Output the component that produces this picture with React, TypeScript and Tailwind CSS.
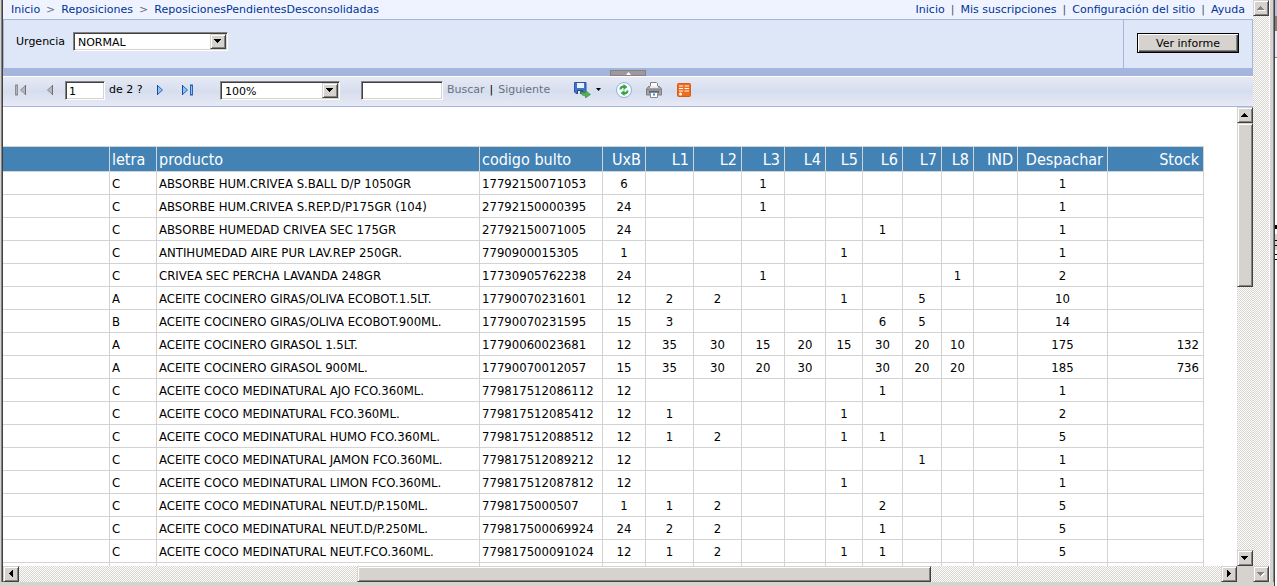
import type { ReactNode } from "react";

type Align = "left" | "center" | "right";

interface Column { label: string; width: number; head: Align; cell: Align; }

const COLUMNS: Column[] = [
  { label: "", width: 107, head: "left", cell: "left" },
  { label: "letra", width: 47, head: "left", cell: "left" },
  { label: "producto", width: 323, head: "left", cell: "left" },
  { label: "codigo bulto", width: 123, head: "left", cell: "left" },
  { label: "UxB", width: 43, head: "right", cell: "center" },
  { label: "L1", width: 48, head: "right", cell: "center" },
  { label: "L2", width: 48, head: "right", cell: "center" },
  { label: "L3", width: 43, head: "right", cell: "center" },
  { label: "L4", width: 41, head: "right", cell: "center" },
  { label: "L5", width: 37, head: "right", cell: "center" },
  { label: "L6", width: 40, head: "right", cell: "center" },
  { label: "L7", width: 39, head: "right", cell: "center" },
  { label: "L8", width: 32, head: "right", cell: "center" },
  { label: "IND", width: 44, head: "right", cell: "center" },
  { label: "Despachar", width: 90, head: "right", cell: "center" },
  { label: "Stock", width: 96, head: "right", cell: "right" },
];

// letra | producto | codigo | UxB | L1..L8 | IND | Despachar | Stock
const ROWS = [
  "C|ABSORBE HUM.CRIVEA S.BALL D/P 1050GR|17792150071053|6|||1|||||||1|",
  "C|ABSORBE HUM.CRIVEA S.REP.D/P175GR (104)|27792150000395|24|||1|||||||1|",
  "C|ABSORBE HUMEDAD CRIVEA SEC 175GR|27792150071005|24||||||1||||1|",
  "C|ANTIHUMEDAD AIRE PUR LAV.REP 250GR.|7790900015305|1|||||1|||||1|",
  "C|CRIVEA SEC PERCHA LAVANDA 248GR|17730905762238|24|||1|||||1||2|",
  "A|ACEITE COCINERO GIRAS/OLIVA ECOBOT.1.5LT.|17790070231601|12|2|2|||1||5|||10|",
  "B|ACEITE COCINERO GIRAS/OLIVA ECOBOT.900ML.|17790070231595|15|3|||||6|5|||14|",
  "A|ACEITE COCINERO GIRASOL 1.5LT.|17790060023681|12|35|30|15|20|15|30|20|10||175|132",
  "A|ACEITE COCINERO GIRASOL 900ML.|17790070012057|15|35|30|20|30||30|20|20||185|736",
  "C|ACEITE COCO MEDINATURAL AJO FCO.360ML.|779817512086112|12||||||1||||1|",
  "C|ACEITE COCO MEDINATURAL FCO.360ML.|779817512085412|12|1||||1|||||2|",
  "C|ACEITE COCO MEDINATURAL HUMO FCO.360ML.|779817512088512|12|1|2|||1|1||||5|",
  "C|ACEITE COCO MEDINATURAL JAMON FCO.360ML.|779817512089212|12|||||||1|||1|",
  "C|ACEITE COCO MEDINATURAL LIMON FCO.360ML.|779817512087812|12|||||1|||||1|",
  "C|ACEITE COCO MEDINATURAL NEUT.D/P.150ML.|7798175000507|1|1|2||||2||||5|",
  "C|ACEITE COCO MEDINATURAL NEUT.D/P.250ML.|779817500069924|24|2|2||||1||||5|",
  "C|ACEITE COCO MEDINATURAL NEUT.FCO.360ML.|779817500091024|12|1|2|||1|1||||5|",
  "||||||||||||||",
].map((r) => r.split("|"));

const ALIGN: Record<Align, string> = {
  left: "text-left pl-0.5",
  center: "text-center",
  right: "text-right pr-1",
};

const RAISED = "bg-[#d6d3ce] border border-t-[#d6d3ce] border-l-[#d6d3ce] border-r-[#424142] border-b-[#424142] shadow-[inset_1px_1px_0_#fff,inset_-1px_-1px_0_#848284]";
const SUNKEN = "bg-white border border-t-[#848284] border-l-[#848284] border-r-white border-b-white shadow-[inset_1px_1px_0_#424142,inset_-1px_-1px_0_#d6d3ce]";
const TRACK = "bg-[repeating-conic-gradient(#fff_0_25%,#d6d3ce_0_50%)] bg-[length:2px_2px]";

const ARROWS = {
  up: "M3 0h1v1h1v1h1v1h1v1H0V3h1V2h1V1h1z",
  down: "M0 0h7v1H6v1H5v1H4v1H3V3H2V2H1V1H0z",
  left: "M4 0v7H3V6H2V5H1V4H0V3h1V2h1V1h1V0z",
  right: "M0 0v7h1V6h1V5h1V4h1V3H3V2H2V1H1V0z",
};

function Arrow({ dir, muted }: { dir: keyof typeof ARROWS; muted?: boolean }) {
  const flat = dir === "up" || dir === "down";
  return (
    <svg width={flat ? 8 : 5} height={flat ? 5 : 8} shapeRendering="crispEdges" aria-hidden="true">
      {muted && <path d={ARROWS[dir]} fill="#fff" transform="translate(1 1)" />}
      <path d={ARROWS[dir]} fill={muted ? "#848284" : "#000"} />
    </svg>
  );
}

function ScrollButton({ dir, label, muted }: { dir: keyof typeof ARROWS; label: string; muted?: boolean }) {
  return (
    <button aria-label={label} disabled={muted} className={`flex size-4 shrink-0 items-center justify-center ${RAISED}`}>
      <Arrow dir={dir} muted={muted} />
    </button>
  );
}

function DropDown({ id, label, value, className }: { id: string; label?: string; value: string; className: string }) {
  return (
    <div className={`relative h-[19px] ${className}`}>
      <select id={id} aria-label={label} defaultValue={value} className={`block h-full w-full appearance-none pt-0.5 pr-5 pl-1 ${SUNKEN}`}>
        <option>{value}</option>
      </select>
      <span className={`pointer-events-none absolute top-0.5 right-0.5 flex h-[15px] w-4 items-center justify-center ${RAISED}`}>
        <Arrow dir="down" />
      </span>
    </div>
  );
}

function ToolButton({ label, className, children }: { label: string; className?: string; children: ReactNode }) {
  return <button aria-label={label} title={label} className={`shrink-0 ${className ?? ""}`}>{children}</button>;
}

function PageIcon({ bar, flip, muted }: { bar?: boolean; flip?: boolean; muted?: boolean }) {
  const dark = muted ? "#8b8d92" : "#2a63b4";
  const light = muted ? "#b4b6ba" : "#8cc4f4";
  return (
    <svg width="12" height="12" viewBox="0 0 12 12" className={flip ? "-scale-x-100" : ""}>
      {bar && <rect x="0.5" y="1" width="2" height="10" fill={light} stroke={dark} />}
      <path d="M10.5 1.500v9L5.500 6z" fill={light} stroke={dark} />
      <path d="M10.500 1v10" stroke={muted ? "#6d6f74" : "#174a98"} />
    </svg>
  );
}

function SaveIcon() {
  return (
    <svg width="17" height="16" viewBox="0 0 17 16">
      <path d="M0.5 0.5h11.5v11H2l-1.5-1.5z" fill="#3f74cf" stroke="#2856ab" />
      <path d="M3 1h7v5H3z" fill="#e9f2fd" />
      <path d="M3 8h6v4H3z" fill="#33456f" />
      <path d="M4 9h2v3H4z" fill="#dfe8f6" />
      <path d="M6.500 8.500c1 2 2.500 2.500 5 2.300V8.500l5 4-5 3.500v-2.200c-3 0-5-1.500-5-5.300z" fill="#52b152" stroke="#2f8a3a" strokeWidth="0.600" />
    </svg>
  );
}

function RefreshIcon() {
  return (
    <svg width="16" height="16" viewBox="0 0 16 16">
      <circle cx="8" cy="8" r="7.500" fill="#f7fbff" stroke="#8fb2dc" />
      <path d="M3.500 7.500C3.500 5 5 3.500 7.500 3.500V2l4 3-4 3V6C6 6 5.500 6.500 5.500 7.500z" fill="#3aa548" />
      <path d="M12.500 8.500c0 2.500-1.500 4-4 4V14l-4-3 4-3v2c1.500 0 2-.5 2-1.500z" fill="#3aa548" />
    </svg>
  );
}

function PrintIcon() {
  return (
    <svg width="16" height="16" viewBox="0 0 16 16">
      <path d="M4.500 0.500h6l1 1V6h-7z" fill="#fff" stroke="#7d7f85" />
      <path d="M0.500 7l2-2.500h11l2 2.500v6h-15z" fill="#a3a4a9" stroke="#7c7e84" />
      <path d="M4 4h8v2H4z" fill="#e8e9ec" />
      <path d="M1 7h14v1.500H1z" fill="#8b8d93" />
      <path d="M3 9h10v2H3z" fill="#5c5e64" />
      <path d="M4.500 10.500h7v5h-7z" fill="#fff" stroke="#8a8c92" />
      <path d="M7 11.500h2v2H7z" fill="#3c86d8" />
    </svg>
  );
}

function FeedIcon() {
  return (
    <svg width="14" height="14" viewBox="0 0 14 14">
      <rect x="0.500" y="0.500" width="13" height="13" rx="1" fill="#ee6d1f" stroke="#dc5a10" />
      <path d="M2 3h4M7.500 3h4.500M2 5.500h4M7.500 5.500h4.500M2 8h4M7.500 8h4.500" stroke="#fff" />
      <circle cx="3.500" cy="11" r="1.500" fill="#fff" />
    </svg>
  );
}

function Header() {
  return (
    <header className="flex h-5 items-center justify-between border-b border-[#a5b6de] bg-[#eff3ff] px-2 text-[#003399]">
      <nav className="flex gap-1.5 whitespace-nowrap">
        <a href="#inicio">Inicio</a>
        <span className="text-gray-500">&gt;</span>
        <a href="#reposiciones">Reposiciones</a>
        <span className="text-gray-500">&gt;</span>
        <a href="#informe">ReposicionesPendientesDesconsolidadas</a>
      </nav>
      <nav className="flex gap-1.5 whitespace-nowrap">
        <a href="#inicio">Inicio</a>
        <span className="text-gray-600">|</span>
        <a href="#suscripciones">Mis suscripciones</a>
        <span className="text-gray-600">|</span>
        <a href="#configuracion">Configuración del sitio</a>
        <span className="text-gray-600">|</span>
        <a href="#ayuda">Ayuda</a>
      </nav>
    </header>
  );
}

function Parameters() {
  return (
    <div className="flex h-12 bg-[#dee7f7]">
      <div className="flex flex-1 items-start gap-2 border-l border-[#a5b6de] pt-3 pl-3">
        <label htmlFor="urgencia" className="leading-5">Urgencia</label>
        <DropDown id="urgencia" value="NORMAL" className="w-[155px]" />
      </div>
      <div className="flex items-start border-x border-[#a5b6de] px-[13px] pt-[13px]">
        <button className="h-5 w-[102px] border border-black bg-[#d6d3ce] pt-px leading-4 shadow-[inset_1px_1px_0_#fff,inset_-1px_-1px_0_#424142,inset_-2px_-2px_0_#848284]">
          Ver informe
        </button>
      </div>
    </div>
  );
}

function Toolbar() {
  return (
    <div className="flex h-[31px] items-center border-y border-t-white border-b-[#a5b6de] bg-linear-to-b from-[#e8e9f5] via-[#d6deee] to-[#e8e9f5] pb-[3px] pl-3">
      <ToolButton label="Primera página"><PageIcon bar muted /></ToolButton>
      <ToolButton label="Página anterior" className="ml-[15px]"><PageIcon muted /></ToolButton>
      <input aria-label="Página" defaultValue="1" className={`ml-[11px] h-[19px] w-10 px-[3px] pt-0.5 ${SUNKEN}`} />
      <span className="ml-1 w-[47px] whitespace-nowrap">de 2 ?</span>
      <ToolButton label="Página siguiente"><PageIcon flip /></ToolButton>
      <ToolButton label="Última página" className="ml-[13px]"><PageIcon bar flip /></ToolButton>
      <DropDown id="zoom" label="Zoom" value="100%" className="ml-[27px] w-[120px]" />
      <input aria-label="Buscar texto" className={`ml-[21px] h-[19px] w-[82px] px-1 ${SUNKEN}`} />
      <a href="#buscar" className="ml-1 text-gray-500">Buscar</a>
      <span className="mx-[5px]">|</span>
      <a href="#siguiente" className="text-gray-500">Siguiente</a>
      <ToolButton label="Exportar" className="ml-6 flex items-center gap-1">
        <SaveIcon />
        <svg width="7" height="4"><path d="M1 0h5L3.500 3z" /></svg>
      </ToolButton>
      <ToolButton label="Actualizar" className="ml-[14px]"><RefreshIcon /></ToolButton>
      <ToolButton label="Imprimir" className="ml-[14px]"><PrintIcon /></ToolButton>
      <ToolButton label="Fuente de datos" className="ml-[15px]"><FeedIcon /></ToolButton>
    </div>
  );
}

function Report() {
  return (
    <div className="min-w-0 flex-1 overflow-hidden bg-white pt-[39px] font-['DejaVu_Sans_Condensed','DejaVu_Sans',sans-serif] font-stretch-condensed">
      <table className="w-[1201px] table-fixed border-separate border-spacing-0 whitespace-nowrap">
        <colgroup>
          {COLUMNS.map((c, i) => <col key={i} style={{ width: c.width }} />)}
        </colgroup>
        <thead>
          <tr className="h-[26px] bg-[#4282b5] text-base leading-5 text-white">
            {COLUMNS.map((c, i) => (
              <th key={i} className={`border-y border-r border-[#d3d3d3] p-0 pt-0.5 font-normal ${ALIGN[c.head]}`}>{c.label}</th>
            ))}
          </tr>
        </thead>
        <tbody>
          {ROWS.map((row, i) => (
            <tr key={i} className="h-[23px] text-[13px] leading-5">
              {["", ...row].map((v, j) => (
                <td key={j} className={`border-r border-b border-[#d3d3d3] p-0 pt-0.5 ${ALIGN[COLUMNS[j].cell]}`}>{v}</td>
              ))}
            </tr>
          ))}
        </tbody>
      </table>
    </div>
  );
}

// edge of the window lying behind this one
function BackWindow() {
  return (
    <div className="w-0.5 bg-white">
      <div className="h-4 bg-[#b5bfd6]" />
      <div className="h-[15px] bg-[#808080]" />
      <div className="h-[26px] bg-[#e3ebfa]" />
      <div className="h-px bg-[#848284]" />
      <div className="mt-[167px] h-1 bg-black" />
      <div className="mt-[5px] h-4 bg-[#d6d3ce] pt-1.5">
        <div className="h-px bg-black" />
        <div className="mt-1 h-px bg-black" />
      </div>
      <div className="mt-1 h-px bg-black" />
      <div className="mt-1 h-px bg-black" />
    </div>
  );
}

export default function App() {
  return (
    <div className="flex h-screen overflow-hidden bg-[#d6d3ce] font-['DejaVu_Sans',Verdana,sans-serif] text-[11px] leading-4 text-black">
      <div className="flex min-w-0 flex-1 flex-col border-r border-l border-r-[#424142] border-l-[#d6d3ce] pb-1">
        <div className="flex min-h-0 flex-1 border-r border-l border-[#848284]">
          <main className="flex min-w-0 flex-1 flex-col border-l border-[#424142]">
            <Header />
            <Parameters />
            <div className="flex h-2 items-end justify-center bg-[#a5b6de]">
              <button aria-label="Ocultar parámetros" className="flex h-1.5 w-9 items-center justify-center border border-[#848284] bg-[#9c9a9c]">
                <svg width="5" height="3"><path d="M2.500 0L5 3H0z" fill="#fff" /></svg>
              </button>
            </div>
            <Toolbar />
            <div className="flex min-h-0 flex-1">
              <Report />
              <div className={`flex w-4 flex-col ${TRACK}`}>
                <ScrollButton dir="up" label="Subir" />
                <div className={`h-[164px] ${RAISED}`} />
                <div className="flex-1" />
                <ScrollButton dir="down" label="Bajar" />
              </div>
            </div>
            <div className="flex h-4 shrink-0">
              <div className={`flex flex-1 ${TRACK}`}>
                <ScrollButton dir="left" label="Izquierda" />
                <div className="flex-[339]" />
                <div className={`flex-[573] ${RAISED}`} />
                <div className="flex-[290]" />
                <ScrollButton dir="right" label="Derecha" />
              </div>
              <div className="w-4" />
            </div>
          </main>
          <div className={`flex w-4 flex-col justify-between ${TRACK}`}>
            <ScrollButton dir="up" label="Subir página" muted />
            <ScrollButton dir="down" label="Bajar página" muted />
          </div>
          <div className="w-1 border-l border-white" />
        </div>
      </div>
      <BackWindow />
    </div>
  );
}
